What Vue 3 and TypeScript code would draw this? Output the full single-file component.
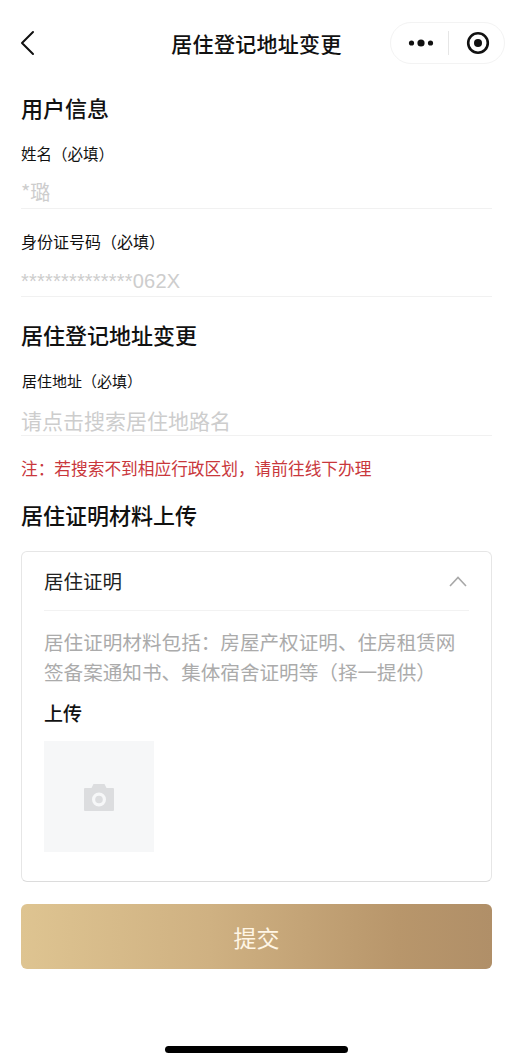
<script setup lang="ts">
const lines: string[] = ['居住证明材料包括：房屋产权证明、住房租赁网', '签备案通知书、集体宿舍证明等（择一提供）']
</script>

<template>
  <div class="page">
    <header class="nav">
      <div class="nav-left">
        <svg class="back" width="16" height="26" viewBox="0 0 16 26" fill="none">
          <path d="M14 2 L3 13 L14 24" stroke="#111" stroke-width="2" stroke-linecap="round" stroke-linejoin="round" />
        </svg>
      </div>
      <div class="nav-title">居住登记地址变更</div>
      <div class="nav-right">
        <div class="capsule">
          <svg width="26" height="10" viewBox="0 0 26 10">
            <circle cx="3.5" cy="5" r="2.6" fill="#111" />
            <circle cx="13" cy="5" r="3.6" fill="#111" />
            <circle cx="22.5" cy="5" r="2.6" fill="#111" />
          </svg>
          <span class="cap-line"></span>
          <svg width="24" height="24" viewBox="0 0 24 24">
            <circle cx="12" cy="12" r="9.8" fill="none" stroke="#111" stroke-width="2.6" />
            <circle cx="12" cy="12" r="4" fill="#111" />
          </svg>
        </div>
      </div>
    </header>

    <main class="content">
      <h2 class="h-user">用户信息</h2>
      <div class="label l-name">姓名（必填）</div>
      <div class="value v-name">*璐</div>
      <div class="label l-id">身份证号码（必填）</div>
      <div class="value v-id">**************062X</div>

      <h2 class="h-addr">居住登记地址变更</h2>
      <div class="label l-addr">居住地址（必填）</div>
      <div class="value v-addr">请点击搜索居住地路名</div>
      <p class="note">注：若搜索不到相应行政区划，请前往线下办理</p>

      <h2 class="h-upload">居住证明材料上传</h2>
      <section class="card">
        <div class="card-head">
          <span class="card-title">居住证明</span>
          <svg width="18" height="12" viewBox="0 0 18 12" fill="none">
            <path d="M1 11 L9 2.5 L17 11" stroke="#a8a8a8" stroke-width="1.6" />
          </svg>
        </div>
        <div class="desc">
          <div v-for="line in lines" :key="line" class="desc-line">{{ line }}</div>
        </div>
        <div class="up-title">上传</div>
        <div class="up-box">
          <svg width="30" height="28" viewBox="0 0 30 28">
            <path fill="#dcdddf" fill-rule="evenodd" d="M1 5h6.5l2-4h11l2 4H29a1 1 0 0 1 1 1v21a1 1 0 0 1-1 1H1a1 1 0 0 1-1-1V6a1 1 0 0 1 1-1zm14 4.5a7 7 0 1 0 0 14a7 7 0 0 0 0-14zm0 3.2a3.8 3.8 0 1 1 0 7.6a3.8 3.8 0 0 1 0-7.6z" />
          </svg>
        </div>
      </section>

      <button class="submit" type="button">提交</button>
    </main>

    <div class="home"></div>
  </div>
</template>

<style>
html,
body {
  margin: 0;
  background: #fff;
}
</style>

<style scoped>
.page {
  width: 513px;
  height: 1061px;
  overflow: hidden;
  background: #fff;
  display: flex;
  flex-direction: column;
  font-family: "Noto Sans CJK SC", "Noto Sans", sans-serif;
  color: #111;
}
.nav {
  height: 64px;
  flex: none;
  padding-top: 21px;
  box-sizing: border-box;
  display: grid;
  grid-template-columns: 1fr auto 1fr;
  align-items: center;
}
.nav-left {
  padding-left: 19px;
  display: flex;
}
.nav-title {
  font-size: 21px;
  line-height: 42px;
  font-weight: 500;
  letter-spacing: 0.3px;
}
.nav-right {
  display: flex;
  justify-content: flex-end;
  padding-right: 8px;
}
.capsule {
  width: 115px;
  height: 42px;
  box-sizing: border-box;
  border: 1px solid #f3f3f3;
  border-radius: 21px;
  display: flex;
  align-items: center;
  padding-left: 17px;
  background: #fff;
}
.cap-line {
  width: 1px;
  height: 24px;
  background: #e6e6e6;
  margin: 0 17px 0 14px;
}
.content {
  padding: 0 21px;
  flex: 1;
  display: flex;
  flex-direction: column;
}
h2 {
  margin: 0;
  font-size: 22px;
  line-height: 30px;
  font-weight: 500;
}
.h-user {
  margin-top: 28px;
}
.label {
  font-size: 16px;
  line-height: 22px;
}
.l-name {
  margin-top: 20px;
  font-size: 15.5px;
}
.value {
  font-size: 20px;
  line-height: 28px;
  color: #cdcdcd;
  border-bottom: 1px solid #f1f1f1;
  padding-bottom: 2px;
}
.v-name {
  margin-top: 14px;
  padding-bottom: 2px;
}
.l-id {
  margin-top: 21px;
}
.v-id {
  margin-top: 15px;
  font-family: "Liberation Sans", sans-serif;
  letter-spacing: 0.2px;
  padding-bottom: 1px;
}
.h-addr {
  margin-top: 22px;
}
.l-addr {
  margin-top: 21px;
  font-size: 15px;
  padding-left: 1px;
}
.v-addr {
  margin-top: 14px;
  font-size: 21px;
  padding-bottom: 1px;
}
.note {
  margin: 20px 0 0;
  font-size: 16.7px;
  line-height: 24px;
  color: #c9373c;
}
.h-upload {
  margin-top: 19px;
}
.card {
  margin-top: 22px;
  height: 331px;
  box-sizing: border-box;
  border: 1px solid #e6e6e6;
  border-bottom-color: #dcdcdc;
  border-radius: 6px;
  padding: 0 22px;
}
.card-head {
  height: 59px;
  box-sizing: border-box;
  border-bottom: 1px solid #f2f2f2;
  display: flex;
  justify-content: space-between;
  align-items: center;
  padding-right: 2px;
}
.card-title {
  font-size: 19.5px;
  line-height: 28px;
  color: #222;
}
.desc {
  margin-top: 16px;
  font-size: 19.6px;
  line-height: 30px;
  color: #ababab;
}
.desc-line {
  white-space: nowrap;
}
.up-title {
  margin-top: 12px;
  font-size: 19px;
  line-height: 28px;
  font-weight: 500;
  color: #111;
}
.up-box {
  margin-top: 14px;
  width: 110px;
  height: 111px;
  background: #f6f7f8;
  display: flex;
  align-items: center;
  justify-content: center;
}
.submit {
  margin-top: 22px;
  height: 65px;
  width: 100%;
  border: 0;
  border-radius: 6px;
  background: linear-gradient(90deg, #dec491 0%, #cfb182 40%, #b8966b 80%, #b08f68 100%);
  color: #fff6e6;
  font-family: inherit;
  font-size: 23px;
  padding: 0;
}
.home {
  flex: none;
  width: 183px;
  height: 7px;
  margin: 0 auto 8px;
  background: #000;
  border-radius: 4px;
}
</style>
